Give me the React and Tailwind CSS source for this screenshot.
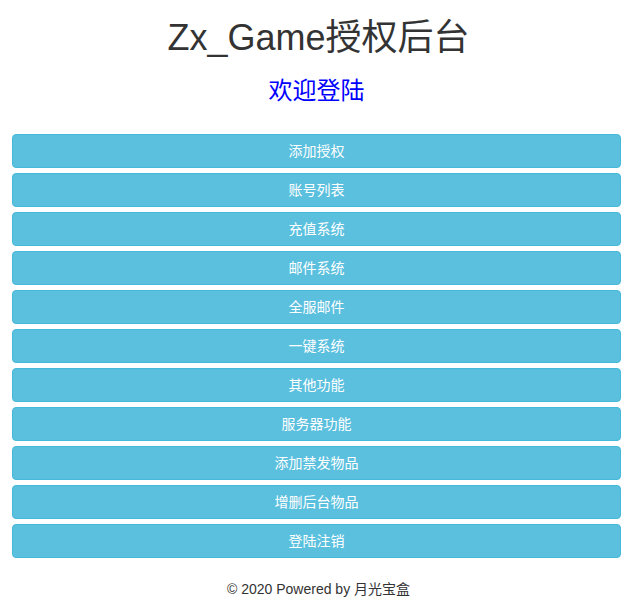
const MENU = [
  '添加授权', '账号列表', '充值系统', '邮件系统', '全服邮件',
  '一键系统', '其他功能', '服务器功能', '添加禁发物品', '增删后台物品', '登陆注销'
];

export default function App() {
  return (
    <div
      className="min-h-screen bg-white text-[#333]"
      style={{ fontFamily: '"Liberation Sans", Arial, "Noto Sans CJK SC", sans-serif' }}
    >
      <h1 className="pt-[18px] text-center text-[36px] leading-[40px]">Zx_Game授权后台</h1>
      <h3 className="mt-[20px] mr-[4px] text-center text-[24px] leading-[26px] text-[#0000ff]">欢迎登陆</h3>

      <div className="mt-[30px] ml-[12px] mr-[16px] flex flex-col gap-[5px]">
        {MENU.map(m => (
          <button
            key={m}
            className="h-[34px] w-full rounded-[4px] border border-[#46b8da] bg-[#5bc0de] text-[14px] text-white"
          >
            {m}
          </button>
        ))}
      </div>

      <p className="mt-[21px] text-center text-[14px] leading-[20px]">© 2020 Powered by 月光宝盒</p>
    </div>
  );
}
